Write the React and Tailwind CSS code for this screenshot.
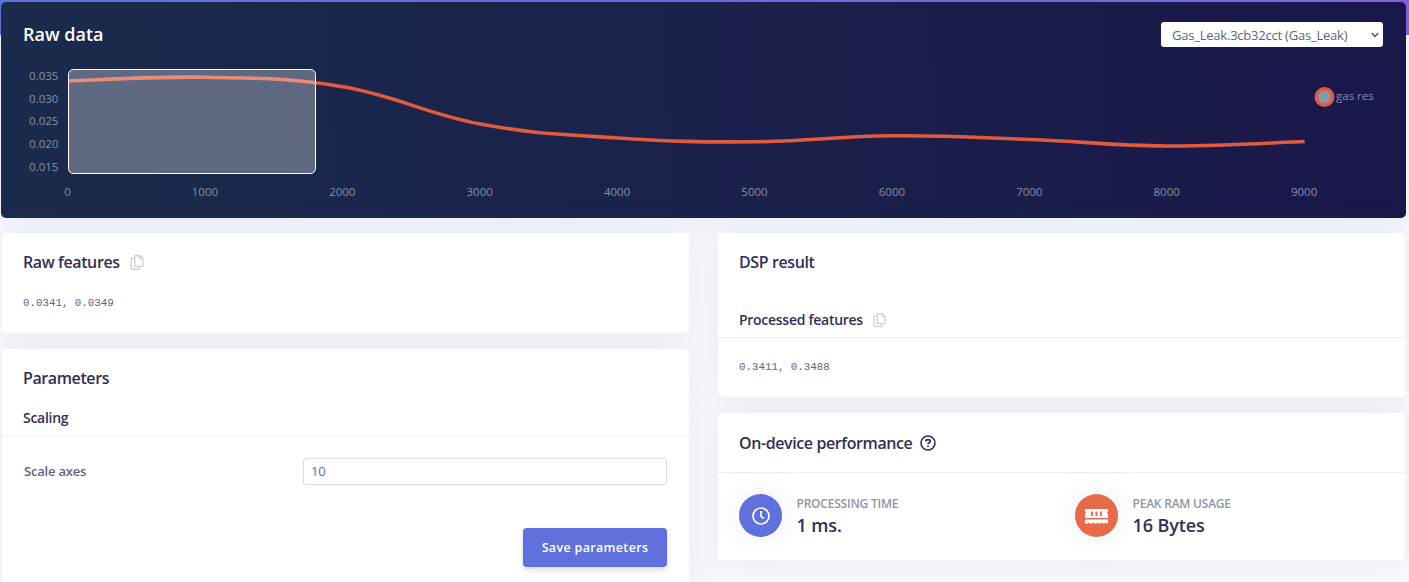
import React from "react";

const values = [81, 77.3, 86.8, 124, 138, 141.8, 135.8, 139.5, 146, 141.5];
const x0 = 67.5;
const step = 137.4;
const points = values.map((y, i) => [x0 + step * i - 0.5, y - 2]);

function spline(pts) {
  const t = 0.2;
  let d = `M${pts[0][0]} ${pts[0][1]}`;
  for (let i = 0; i < pts.length - 1; i++) {
    const prev = pts[Math.max(i - 1, 0)];
    const a = pts[i];
    const b = pts[i + 1];
    const next = pts[Math.min(i + 2, pts.length - 1)];
    d += `C${a[0] + t * (b[0] - prev[0])} ${a[1] + t * (b[1] - prev[1])} ${b[0] - t * (next[0] - a[0])} ${b[1] - t * (next[1] - a[1])} ${b[0]} ${b[1]}`;
  }
  return d;
}

const yTicks = [["0.035", 78], ["0.030", 101], ["0.025", 123], ["0.020", 146], ["0.015", 169]];

function Chart() {
  return (
    <svg className="block h-[156px] w-[1405px]" viewBox="0 60 1405 156">
      <g className="fill-[#8490a5] text-[11.5px]">
        {yTicks.map(([label, y]) => (
          <text key={label} x="57.4" y={y} textAnchor="end">{label}</text>
        ))}
        {points.map(([x], i) => (
          <text key={i} x={x - 0.5} y="194" textAnchor="middle">{i * 1000}</text>
        ))}
        <text x="1335" y="98">gas res</text>
      </g>
      <path d={spline(points)} fill="none" stroke="#e25b3e" strokeWidth="3.6" />
      <circle cx="1323.5" cy="95" r="8.2" fill="#8898aa" stroke="#e25b3e" strokeWidth="3.6" />
      <rect x="67.5" y="67.5" width="247" height="104" rx="5" fill="#fff" fillOpacity="0.3" stroke="#fff" />
    </svg>
  );
}

function CopyIcon({ className }) {
  return (
    <svg className={className} viewBox="0 0 14 16" fill="none" stroke="#ced1da" strokeWidth="1.4" strokeLinejoin="round">
      <path d="M4.6 .8H10.6L13.3 3.5V12.2H4.6ZM10 .8V4.1H13.3" />
      <path d="M4.4 3.6H.8V15.2H9.4V12.4" />
    </svg>
  );
}

function Card({ className, children }) {
  return (
    <section className={`rounded bg-white shadow-[0_0_32px_0_rgba(136,152,170,0.15)] ${className}`}>
      {children}
    </section>
  );
}

function Stat({ color, icon, label, value }) {
  return (
    <div className="flex flex-1 gap-[15px]">
      <div className={`flex size-[43px] items-center justify-center rounded-full shadow-[0_0_32px_0_rgba(136,152,170,0.15)] ${color}`}>{icon}</div>
      <div className="-ml-[0.5px]">
        <div className="mt-[1px] text-[12px] leading-[18px] font-semibold tracking-[-0.22px] text-[#8d96a6]">{label}</div>
        <div className="-mt-px text-[18px] leading-[26px] font-semibold tracking-[-0.1px]">{value}</div>
      </div>
    </div>
  );
}

export default function App() {
  return (
    <div className="h-[582px] w-[1409px] overflow-hidden bg-[#f8f9fe] bg-[linear-gradient(87deg,#5e6fdc,#7f60df)] bg-[length:100%_35px] bg-no-repeat pt-[2px] pl-[1px] font-['Open_Sans',sans-serif] text-[#322f57]">
      <section className="h-[216px] w-[1405px] rounded-[5px] bg-[linear-gradient(87deg,#1b2b4c,#1a174a)] shadow-[0_0_32px_0_rgba(136,152,170,0.15)]">
        <header className="flex h-[60px] items-start justify-between pr-[23px] pl-[22px]">
          <h1 className="pt-[19px] text-[18px] leading-[26px] font-semibold text-white">Raw data</h1>
          <button className="mt-5 flex h-[25px] w-[222px] items-center justify-between rounded-[3px] bg-white pr-[4px] pl-[11px] text-[13px] text-[#5c6484]">
            <span className="pt-[2px] tracking-[-0.22px] whitespace-nowrap">Gas_Leak.3cb32cct (Gas_Leak)</span>
            <svg className="h-[6px] w-[8px]" viewBox="0 0 8 6" fill="none" stroke="#48546f" strokeWidth="1.4"><path d="M.8 1L4 4.4L7.2 1" /></svg>
          </button>
        </header>
        <Chart />
      </section>
      <main className="mt-[15px] ml-[1px] flex gap-[29px]">
        <div className="flex w-[687px] flex-col gap-4">
          <Card className="h-[100px] px-[21px] pt-[17px]">
            <h2 className="flex items-center text-[16px] leading-6 font-semibold tracking-[-0.4px]">Raw features<CopyIcon className="ml-[10.5px] h-[15px] w-[14px]" /></h2>
            <p className="mt-[21px] font-['Liberation_Mono',monospace] text-[10.8px] leading-4 text-[#5c6484]">0.0341, 0.0349</p>
          </Card>
          <Card className="h-[250px] pt-[17px]">
            <h2 className="px-[21px] text-[16px] leading-6 font-semibold tracking-[-0.4px]">Parameters</h2>
            <h3 className="mt-[17px] h-[29px] border-b border-[#eceef1] px-[21px] text-[14px] leading-[22px] font-semibold tracking-[-0.28px]">Scaling</h3>
            <div className="mt-[22px] flex items-center px-[22px]">
              <label className="w-[279px] text-[13px] font-semibold tracking-[-0.2px] text-[#5c6484]">Scale axes</label>
              <div className="h-[27px] w-[364px] rounded-[3px] border border-[#d3dee8] px-[7px] text-[13px] leading-[25px] tracking-[-0.2px] text-[#6b7280]">10</div>
            </div>
            <div className="mt-[43px] flex justify-end pr-[22px]">
              <button className="h-[39px] w-[144px] rounded bg-[#6070dc] pt-[2px] text-[12.5px] font-semibold tracking-[0.33px] text-white shadow-[0_4px_6px_rgba(50,50,93,0.11),0_1px_3px_rgba(0,0,0,0.08)]">Save parameters</button>
            </div>
          </Card>
        </div>
        <div className="flex w-[687px] flex-col gap-4">
          <Card className="h-[164px] pt-[17px]">
            <h2 className="px-[21px] text-[16px] leading-6 font-semibold tracking-[-0.4px]">DSP result</h2>
            <h3 className="mt-[35px] flex h-[29px] border-b border-[#eceef1] px-[21px] text-[14px] leading-[22px] font-semibold tracking-[-0.28px]">Processed features<CopyIcon className="mt-[4px] ml-[10.5px] h-[14px] w-[13px]" /></h3>
            <p className="mt-[21px] px-[21px] font-['Liberation_Mono',monospace] text-[10.8px] leading-4 text-[#5c6484]">0.3411, 0.3488</p>
          </Card>
          <Card className="h-[147px] pt-[18px]">
            <h2 className="flex h-[42px] border-b border-[#eceef1] px-[21px] text-[16px] leading-6 font-semibold tracking-[-0.4px]">
              On-device performance
              <svg className="mt-[4px] ml-[7.5px] size-4" viewBox="0 0 16 16" fill="none" stroke="#322f57" strokeWidth="1.6">
                <circle cx="8" cy="8" r="7" />
                <path d="M5.8 6.3C6 4.2 10.2 4.1 10.2 6.3C10.2 7.7 8 7.6 8 9.2M8 10.6V12.1" strokeWidth="1.8" />
              </svg>
            </h2>
            <div className="flex px-[21px] pt-[21px]">
              <div className="flex w-[336px]">
                <Stat color="bg-[#6070dc]" label="PROCESSING TIME" value="1 ms." icon={
                  <svg className="mt-[1px] size-[18px]" viewBox="0 0 18 18" fill="none" stroke="#fff" strokeWidth="1.7"><circle cx="9" cy="9" r="8" /><path d="M9 4V9.3L11.7 11.5" /></svg>
                } />
              </div>
              <Stat color="bg-[#e76b4b]" label="PEAK RAM USAGE" value="16 Bytes" icon={
                <svg className="mt-[2px] h-[15px] w-[23px]" viewBox="0 0 23 15" fill="#fff">
                  <path fillRule="evenodd" d="M0 0H23V2.5Q21 3.7 23 5V9H0V5Q2 3.7 0 2.5ZM6 2.5V7H8V2.5ZM10.4 2.5V7H12.4V2.5ZM14.9 2.5V7H16.9V2.5Z" />
                  <path d="M0 10.4H23V14.5H21.4L20.5 13L19.6 14.5H17.4L16.5 13L15.6 14.5H13.2L12.3 13L11.4 14.5H9L8.1 13L7.2 14.5H4.6L3.7 13L2.8 14.5H0Z" />
                </svg>
              } />
            </div>
          </Card>
        </div>
      </main>
    </div>
  );
}
